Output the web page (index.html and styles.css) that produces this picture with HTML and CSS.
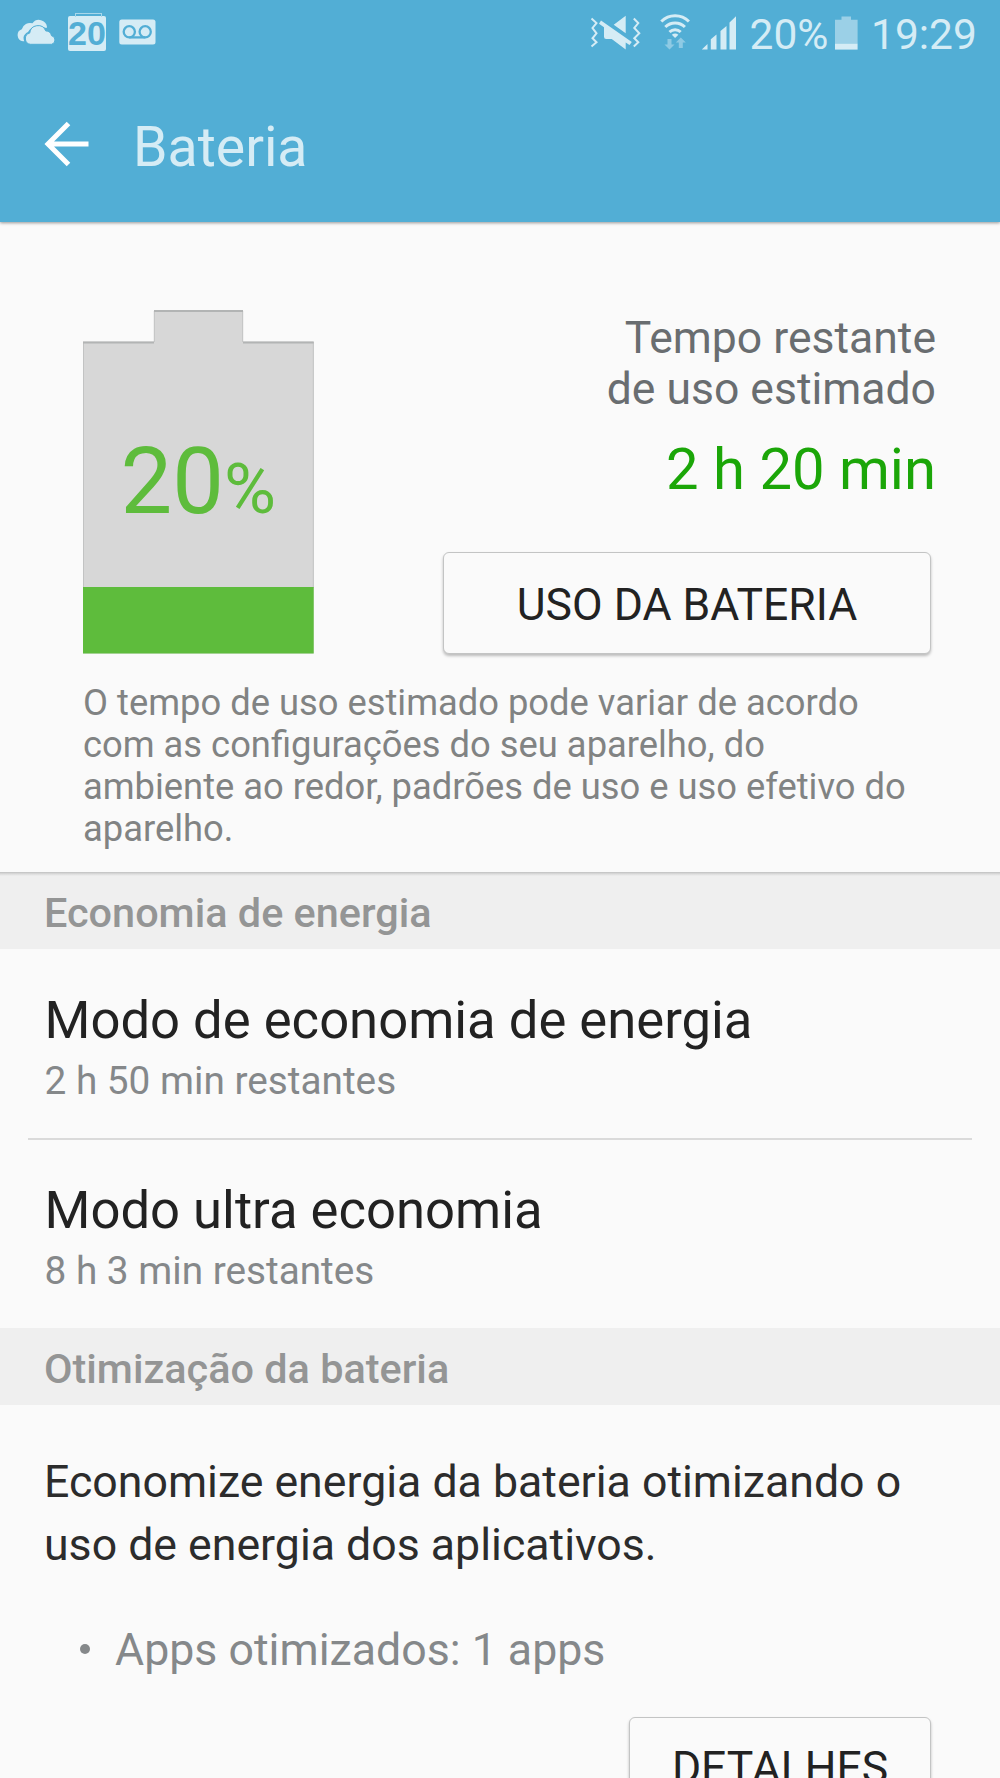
FILE: index.html
```html
<!DOCTYPE html>
<html lang="pt-BR">
<head>
<meta charset="utf-8">
<title>Bateria</title>
<link rel="stylesheet" href="styles.css">
</head>
<body>
<main class="screen">
  <header class="header">
    <div class="status">
      <div class="status-left">
        <svg class="clouds" width="40" height="26" viewBox="18 20 40 26">
          <path class="ink" d="M24 42.200a6.200 6.200 0 0 1-1.200-12 8.500 8.500 0 0 1 10.700-5.900 8 8 0 0 1 14.500 3.700q0 1-1 1-3.500-2-7-2-8 0-11 6-4 2-4.500 5.500 0 2 .8 3.700z"/>
          <path class="ink" stroke="#52aed5" stroke-width="1" d="M31.500 45.300a5.700 5.700 0 0 1-.8-11.200 8.300 8.300 0 0 1 16-2.200 6 6 0 0 1 5.800 4.800 4.400 4.400 0 0 1 0 8.600z"/>
        </svg>
        <div class="calendar"><span>20</span></div>
        <svg class="voicemail" width="37" height="26" viewBox="119 19.500 37 26">
          <rect class="ink" x="119.300" y="20" width="36.200" height="25" rx="2.500"/>
          <g fill="none" stroke="#52aed5" stroke-width="2.300"><circle cx="129.300" cy="32.300" r="5.600"/><circle cx="145.200" cy="32.300" r="5.600"/><path d="M129.300 37.900h15.900"/></g>
        </svg>
      </div>
      <div class="status-right">
        <svg class="vibrate" width="51" height="36" viewBox="590 14 51 36">
          <g fill="none" stroke="#d5ecf5" stroke-width="2"><path d="M591.500 18.500l5 4.500-4 5 4 5.300-4 5 4 4-5 4.200"/><path d="M633.800 18.500l4.500 4.500-4 5 5 5.300-5 5 4 4-4.500 4.200"/></g>
          <path class="ink" d="M625.700 15.800v17.400l-12-8.500zM601 20.500l30.800 21.600-2.300 2.900-3.800-2.400v6.800l-14-10.500h-5.500q-2.200 0-2.200-2.200v-9.500l-5-3.500z"/>
        </svg>
        <svg class="wifi" width="30" height="36" viewBox="660 14 30 36">
          <g fill="none" stroke="#d5ecf5" stroke-width="3"><path d="M661.300 21.500a19.500 19.500 0 0 1 27.600 0"/><path d="M665.300 27a14 14 0 0 1 19.600 0"/><path d="M669.500 32a8.200 8.200 0 0 1 11.200 0"/></g>
          <path class="ink" d="M671.800 34.800q3.300-2.600 6.600 0l-3.300 3.300z"/>
          <path fill="#8ecae4" d="M667.500 39h4v5.500h3l-5 5-5-5h3zM678.800 48h4v-5.500h3l-5-5-5 5h3z"/>
        </svg>
        <svg class="signal" width="36" height="34" viewBox="700.500 15.500 36 34">
          <path class="ink" d="M701.300 49.100l5.700-5.700v5.700zM710.300 49.100v-10.400l5.700-4.700v15.100zM720 49.100v-18.600l6-5v23.600zM729 49.100v-27l6.500-6.400v33.400z"/>
        </svg>
        <span class="percent">20%</span>
        <svg class="mini-battery" width="23" height="34" viewBox="835 15.500 23 34">
          <path fill="#9bd0e7" d="M841.500 16h9.500v3.200h6.600v23.800h-22.600v-23.800h6.500z"/><path class="ink" d="M835 43h22.600v6.100h-22.600z"/>
        </svg>
        <span class="clock">19:29</span>
      </div>
    </div>
    <div class="titlebar">
      <svg class="back" width="46" height="46" viewBox="44.500 121 46 46"><path fill="none" stroke="#fff" stroke-width="5" d="M69 123.500l-20.500 20.500 20.500 20.500M48 144h41"/></svg>
      <h1>Bateria</h1>
    </div>
  </header>

  <section class="summary">
    <div class="summary-top">
      <div class="battery">
        <svg class="battery-shape" width="231" height="344" viewBox="83 310 231 344">
          <path fill="#d7d7d7" d="M83 341.500h71v-31.500h89v31.500h70.700v312h-230.700z"/>
          <path fill="none" stroke="#c2c3c3" d="M83.500 342v246M154.300 311v31M242.700 311v31M313.300 342v246"/>
          <path fill="none" stroke="#b2b4b4" stroke-width="2" d="M83 342.500h71M154 311h89M243 342.500h70.700"/>
          <path fill="#5ebc3c" d="M83 587h230.700v66.500h-230.700z"/>
        </svg>
        <div class="level"><span class="level-num">20</span><span class="level-sign">%</span></div>
      </div>
      <div class="estimate">
        <p class="estimate-label">Tempo restante<br>de uso estimado</p>
        <p class="estimate-time">2 h 20 min</p>
        <button class="btn usage">USO DA BATERIA</button>
      </div>
    </div>
    <p class="note">O tempo de uso estimado pode variar de acordo<br>com as configurações do seu aparelho, do<br>ambiente ao redor, padrões de uso e uso efetivo do<br>aparelho.</p>
  </section>

  <h2 class="section first">Economia de energia</h2>
  <div class="item">
    <div class="item-title">Modo de economia de energia</div>
    <div class="item-sub">2 h 50 min restantes</div>
  </div>
  <hr>
  <div class="item">
    <div class="item-title">Modo ultra economia</div>
    <div class="item-sub">8 h 3 min restantes</div>
  </div>
  <h2 class="section second">Otimização da bateria</h2>
  <div class="optimize">
    <p class="optimize-text">Economize energia da bateria otimizando o<br>uso de energia dos aplicativos.</p>
    <ul class="apps"><li>Apps otimizados: 1 apps</li></ul>
    <button class="btn details">DETALHES</button>
  </div>
</main>
</body>
</html>
```
FILE: styles.css
```css
* { box-sizing: border-box; }
body, h1, h2, p, ul, button { margin: 0; padding: 0; }
body { background: #fafafa; font-family: Roboto, sans-serif; }
svg { display: block; flex: none; }
.ink { fill: #d5ecf5; }
.screen { width: 1000px; height: 1778px; overflow: hidden; background: #fafafa; white-space: nowrap; }

.header { height: 222px; background: #52aed5; box-shadow: 0 1px 3px rgba(0, 0, 0, .4); color: #d5ecf5; }
.status { height: 64px; display: flex; justify-content: space-between; align-items: center; padding: 0 26px 0 17px; }
.status-left, .status-right { display: flex; align-items: center; }
.status-left { gap: 12px; }
.calendar { width: 38px; height: 35px; margin: 3px 0 0 -1px; border-radius: 2px; background: #d5ecf5; color: #52aed5; font: bold 34px/35px "Liberation Sans", sans-serif; position: relative; }
.calendar::before { content: ""; position: absolute; left: 7px; top: -3px; width: 25px; height: 3px; border: 1px solid #a8d7ea; border-bottom: 0; }
.calendar span { display: flex; justify-content: center; margin: 0 -2px; }
.voicemail { margin-left: 1px; }
.status-right { font-size: 42.500px; line-height: 64px; }
.wifi { margin-left: 19px; }
.signal { margin: 1px 0 0 10.500px; }
.percent { width: 79px; margin: 5px 0 0 13px; }
.mini-battery { margin: 1px 0 0 6.500px; }
.clock { width: 103px; margin: 5px 0 0 13px; }
.titlebar { height: 158px; display: flex; align-items: center; padding-left: 44px; }
.titlebar .back { margin-top: 2px; }
h1 { font-weight: 400; font-size: 55.400px; line-height: 64px; margin: 10px 0 0 43px; }

.summary { height: 650px; padding: 88px 64px 0 83px; }
.summary-top { display: flex; justify-content: space-between; height: 344px; }
.battery { display: grid; }
.battery > * { grid-area: 1 / 1; }
.level { color: #5ebc3c; padding: 125px 0 0 37.500px; line-height: 94px; z-index: 1; }
.level-num { font-size: 92px; }
.level-sign { font-size: 71px; }
.estimate { display: flex; flex-direction: column; align-items: flex-end; text-align: right; }
.estimate-label { margin-top: 2.500px; font-size: 44.500px; line-height: 51px; color: #696d70; }
.estimate-time { font-size: 58px; line-height: 66px; margin-top: 21.500px; color: #1ba608; }
.btn { display: block; background: #fafafa; border: 1px solid #c3c4c4; border-radius: 6px; box-shadow: 0 2px 3px rgba(0, 0, 0, .25); font: 400 44.500px/52px Roboto, sans-serif; color: #222; text-align: center; }
.usage { width: 488px; height: 102px; margin: 50px 5px 0 0; padding-top: 3px; }
.note { font-size: 36.330px; line-height: 42.100px; color: #818383; margin-top: 27.700px; }

.section { height: 77px; background: #efefef; color: #949595; font-size: 41.400px; font-weight: 500; line-height: 77px; padding-left: 44px; }
.section.first { background: linear-gradient(#bfc0c0, #dcdcdc 2px, #efefef 4px); padding-top: 3px; }
.section.second { height: 77px; padding-top: 3px; }
.item { height: 189px; padding: 41px 44.500px 0; }
.item-title { font-size: 52.600px; line-height: 60px; color: #222; }
.item-sub { font-size: 38.750px; line-height: 46px; color: #85888a; margin-top: 7.700px; }
hr { height: 2px; margin: 0 28px -1px; border: 0; background: #dadada; }
.optimize { padding: 46px 69px 0 44px; }
.optimize-text { font-size: 44.650px; line-height: 63px; color: #2c2c2c; }
.apps { list-style: none; font-size: 44.700px; line-height: 60px; color: #85888a; margin-top: 43px; padding-left: 34px; }
.apps li { display: flex; align-items: center; gap: 25px; }
.apps li::before { content: ""; width: 10px; height: 10px; margin: 0 0 3px 2px; border-radius: 50%; background: #85888a; }
.details { width: 302px; height: 102px; margin: 37px 0 0 auto; }
```
